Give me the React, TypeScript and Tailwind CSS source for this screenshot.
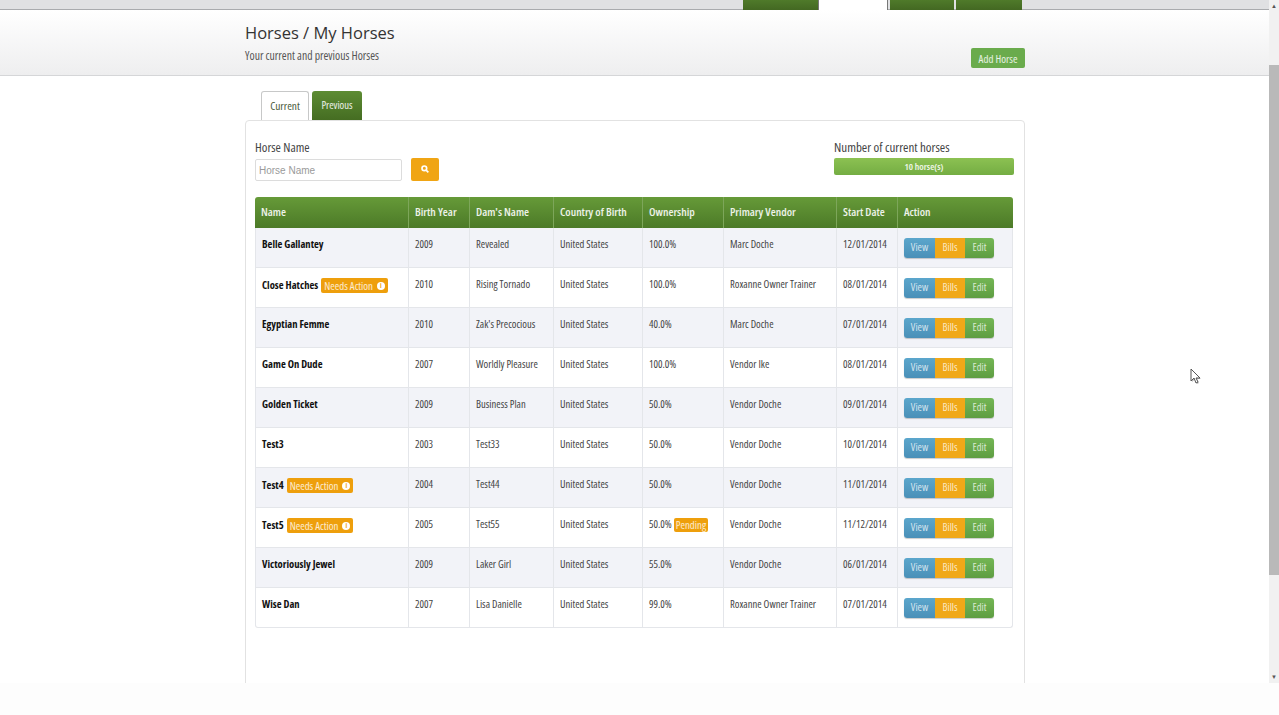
import React from "react";

type Row = {
  name: string;
  needs?: boolean;
  year: string;
  dam: string;
  own: string;
  pending?: boolean;
  vendor: string;
  date: string;
};

const rows: Row[] = [
  { name: "Belle Gallantey", year: "2009", dam: "Revealed", own: "100.0%", vendor: "Marc Doche", date: "12/01/2014" },
  { name: "Close Hatches", needs: true, year: "2010", dam: "Rising Tornado", own: "100.0%", vendor: "Roxanne Owner Trainer", date: "08/01/2014" },
  { name: "Egyptian Femme", year: "2010", dam: "Zak's Precocious", own: "40.0%", vendor: "Marc Doche", date: "07/01/2014" },
  { name: "Game On Dude", year: "2007", dam: "Worldly Pleasure", own: "100.0%", vendor: "Vendor Ike", date: "08/01/2014" },
  { name: "Golden Ticket", year: "2009", dam: "Business Plan", own: "50.0%", vendor: "Vendor Doche", date: "09/01/2014" },
  { name: "Test3", year: "2003", dam: "Test33", own: "50.0%", vendor: "Vendor Doche", date: "10/01/2014" },
  { name: "Test4", needs: true, year: "2004", dam: "Test44", own: "50.0%", vendor: "Vendor Doche", date: "11/01/2014" },
  { name: "Test5", needs: true, year: "2005", dam: "Test55", own: "50.0%", pending: true, vendor: "Vendor Doche", date: "11/12/2014" },
  { name: "Victoriously Jewel", year: "2009", dam: "Laker Girl", own: "55.0%", vendor: "Vendor Doche", date: "06/01/2014" },
  { name: "Wise Dan", year: "2007", dam: "Lisa Danielle", own: "99.0%", vendor: "Roxanne Owner Trainer", date: "07/01/2014" },
];

const heads = ["Name", "Birth Year", "Dam's Name", "Country of Birth", "Ownership", "Primary Vendor", "Start Date", "Action"];
const widths = [154, 61, 84, 89, 81, 113, 61, 115];
const cell = "border-r border-b border-[#e4e6ea] pl-[6px] pr-0 align-top pt-[10px] whitespace-nowrap text-[10.6px] [font-stretch:75%] leading-[13px] text-[#444]";

function Action() {
  return (
    <div className="flex h-[20px] w-[90px] overflow-hidden rounded-[3px] text-center text-[10.5px] leading-[19px] [font-stretch:75%] text-white/75 shadow-[0_1px_1px_rgba(0,0,0,0.2)]">
      <span className="w-[31px] bg-gradient-to-b from-[#5ba6cc] to-[#4a90b8]">View</span>
      <span className="w-[30px] bg-[#f0a818]">Bills</span>
      <span className="w-[29px] bg-gradient-to-b from-[#74b655] to-[#5e9d42]">Edit</span>
    </div>
  );
}

function Needs() {
  return (
    <span className="ml-[3px] inline-flex h-[15px] items-center gap-[4px] rounded-[2px] bg-[#ee9f0c] px-[3px] text-[10.8px] font-normal text-white/80">
      Needs Action
      <span className="flex h-[8px] w-[8px] items-center justify-center rounded-full bg-white text-[7px] font-bold leading-none text-[#ee9f0c]">i</span>
    </span>
  );
}

export default function App() {
  return (
    <div className="flex h-[715px] w-[1279px] flex-col overflow-hidden bg-white font-['Open_Sans',sans-serif]">
      <div className="flex h-[683px] min-h-0">
        <div className="min-w-0 flex-1">
          <div className="flex h-[10px] border-b border-[#a9abae] bg-[#e0e1e3] pl-[743px]">
            <div className="h-[10px] w-[75px] bg-gradient-to-b from-[#4f7a2a] to-[#436822]" />
            <div className="h-[10px] w-[70px] border-x border-[#777] bg-white" />
            <div className="ml-[2px] h-[10px] w-[64px] bg-gradient-to-b from-[#4f7a2a] to-[#436822]" />
            <div className="ml-[2px] h-[10px] w-[66px] bg-gradient-to-b from-[#4f7a2a] to-[#436822]" />
          </div>
          <div className="flex h-[66px] justify-between border-b border-[#d5d6d8] bg-gradient-to-b from-white to-[#eeeeef] pl-[245px] pr-[244px]">
            <div>
              <h1 className="mt-[10px] text-[16.5px] leading-[26px] text-[#333]">Horses / My Horses</h1>
              <p className="mt-[2px] text-[11.7px] leading-[14px] [font-stretch:75%] text-[#555]">Your current and previous Horses</p>
            </div>
            <button className="mt-[38px] h-[20px] w-[54px] rounded-[2px] bg-[#6aab4c] text-[10.9px] leading-[19px] [font-stretch:75%] text-white/85">Add Horse</button>
          </div>
          <div className="ml-[245px] mr-[244px] mt-[15px] flex h-[29px] gap-[3px] pl-[16px]">
            <div className="z-10 flex h-[29px] w-[48px] items-center justify-center rounded-t-[3px] border border-b-0 border-[#c7c8c8] bg-white pb-[1px] text-[11.4px] [font-stretch:75%] text-[#4a5a3a]">Current</div>
            <div className="flex h-[29px] w-[50px] items-center justify-center rounded-t-[3px] bg-gradient-to-b from-[#5d8c33] to-[#456d22] text-[10.6px] font-medium [font-stretch:75%] text-white/90">Previous</div>
          </div>
          <div className="ml-[245px] mr-[244px] h-[600px] rounded-t-[4px] border border-[#e2e2e2] bg-white px-[9px]">
            <div className="flex justify-between pt-[19px]">
              <div>
                <div className="text-[12.8px] leading-[14px] [font-stretch:75%] text-[#444]">Horse Name</div>
                <div className="mt-[5px] flex gap-[9px]">
                  <input
                    placeholder="Horse Name"
                    className="h-[22px] w-[147px] rounded-[2px] border border-[#dcdcdc] px-[3px] font-['Liberation_Sans',sans-serif] text-[10px] outline-none placeholder:text-[#9a9a9a]"
                  />
                  <button className="mt-[-1px] flex h-[23px] w-[28px] items-center justify-center rounded-[2px] bg-[#f0a514] pb-[1px]">
                    <svg width="8" height="8" viewBox="0 0 24 24" fill="none" stroke="white" strokeWidth="5">
                      <circle cx="10" cy="10" r="7" />
                      <path d="M16 16l6 6" />
                    </svg>
                  </button>
                </div>
              </div>
              <div className="mr-[1px] w-[180px]">
                <div className="text-[13px] leading-[14px] [font-stretch:75%] text-[#444]">Number of current horses</div>
                <div className="mt-[4px] h-[17px] rounded-[2px] bg-gradient-to-b from-[#8cc152] to-[#74ad43] text-center text-[9.5px] font-semibold leading-[17px] [font-stretch:75%] text-white/90">10 horse(s)</div>
              </div>
            </div>
            <table className="mt-[16px] w-[758px] table-fixed border-separate border-spacing-0">
              <colgroup>
                {widths.map((w, i) => (
                  <col key={i} style={{ width: w }} />
                ))}
              </colgroup>
              <thead>
                <tr className="h-[31px]">
                  {heads.map((h) => (
                    <th key={h} className="border-r border-[#7da65a] bg-gradient-to-b from-[#669a38] to-[#4c7a28] pb-[1px] pl-[6px] pr-0 text-left text-[11.5px] font-semibold [font-stretch:75%] text-white/90 first:rounded-tl-[3px] last:rounded-tr-[3px] last:border-r-0">{h}</th>
                  ))}
                </tr>
              </thead>
              <tbody>
                {rows.map((r, i) => (
                  <tr key={r.name} className={`h-[40px] ${i % 2 === 0 ? "bg-[#f2f3f8]" : "bg-white"}`}>
                    <td className={`${cell} border-l font-bold !text-[#111] ${i === 9 ? "rounded-bl-[3px]" : ""}`}>
                      {r.needs ? (
                        <div className="flex h-[15px] items-center">
                          <span>{r.name}</span>
                          <Needs />
                        </div>
                      ) : (
                        <span>{r.name}</span>
                      )}
                    </td>
                    <td className={cell}>{r.year}</td>
                    <td className={cell}>{r.dam}</td>
                    <td className={cell}>United States</td>
                    <td className={cell}>
                      <div className="flex h-[13px] items-center">
                        {r.own}
                        {r.pending && <span className="ml-[2px] h-[14px] shrink-0 rounded-[2px] bg-[#ee9f0c] px-[2px] text-[10.8px] leading-[14px] text-white/80">Pending</span>}
                      </div>
                    </td>
                    <td className={cell}>{r.vendor}</td>
                    <td className={cell}>{r.date}</td>
                    <td className={`${cell} ${i === 9 ? "rounded-br-[3px]" : ""}`}>
                      <Action />
                    </td>
                  </tr>
                ))}
              </tbody>
            </table>
          </div>
        </div>
        <div className="flex w-[10px] flex-col bg-[#f1f1f1]">
          <div className="flex h-[65px] items-start justify-center pt-[3px] text-[6px] leading-none text-[#555]">▲</div>
          <div className="h-[510px] bg-[#b9b9b9]" />
          <div className="flex flex-1 items-end justify-center pb-[3px] text-[6px] leading-none text-[#555]">▼</div>
        </div>
      </div>
      <div className="flex-1 bg-[#fdfdfd]" />
      <svg className="absolute left-[1190px] top-[368px]" width="11" height="16" viewBox="0 0 11 16">
        <path d="M2 2v12l3-3 2 5 2-1-2-4h4z" fill="#777" opacity="0.5" />
        <path d="M1 1v12l3-3 2 5 2-1-2-4h4z" fill="white" stroke="#555" strokeWidth="1" />
      </svg>
    </div>
  );
}
